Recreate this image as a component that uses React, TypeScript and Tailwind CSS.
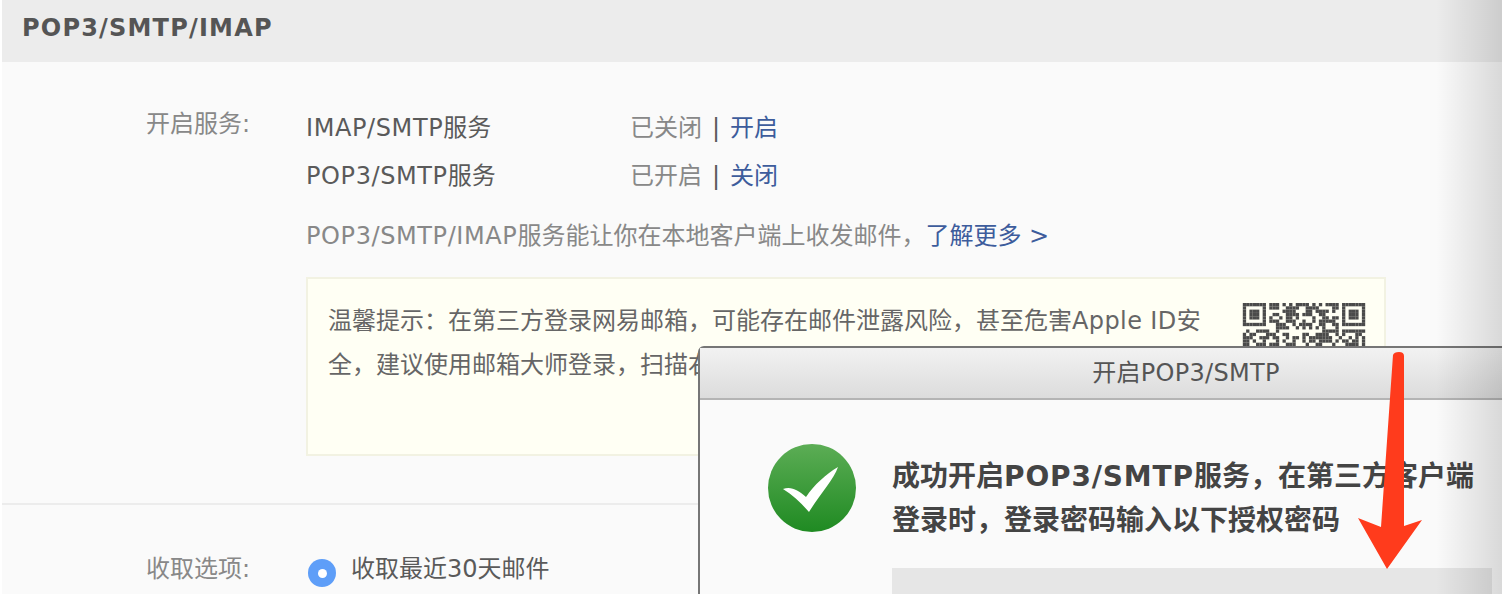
import React from "react";

const font = { fontFamily: '"DejaVu Sans","Noto Sans CJK SC",sans-serif' };
const C = "\uFF0C";
const K = "\uFF1A";

const W = 37;
const H = 13;
function finder(x: number, y: number) {
  const inX = x < 7 ? x : x >= W - 7 ? x - (W - 7) : -1;
  if (inX < 0 || y > 7) return null;
  if (y === 7) return false;
  const edge = inX === 0 || inX === 6 || y === 0 || y === 6;
  const core = inX >= 2 && inX <= 4 && y >= 2 && y <= 4;
  return edge || core;
}
function on(x: number, y: number) {
  const f = finder(x, y);
  if (f !== null) return f;
  if ((x === 7 || x === W - 8) && y < 8) return false;
  return ((x * 7 + y * 13 + ((x * y) % 5) * 11 + ((x ^ y) % 3) * 5) % 9) < 5;
}
const cells: [number, number][] = [];
for (let y = 0; y < H; y++) for (let x = 0; x < W; x++) if (on(x, y)) cells.push([x, y]);

function QR() {
  return (
    <svg width="124" height="43" viewBox="0 0 37 13" className="block" shapeRendering="geometricPrecision">
      {cells.map(([x, y]) => (
        <rect key={x + "-" + y} x={x} y={y} width="1" height="1" fill="#4a4a4a" />
      ))}
    </svg>
  );
}

function L({ children }: { children: React.ReactNode }) {
  return <span className="tracking-[0.6px]">{children}</span>;
}

function Row({ name, status, action }: { name: string; status: string; action: string }) {
  return (
    <div className="flex h-12 items-center">
      <span className="w-[324px] text-[#5a5a5a]">
        <L>{name}</L>服务
      </span>
      <span className="text-[#888]">{status}</span>
      <span className="ml-[10px] mr-[10px] text-[#5a5a5a]">|</span>
      <span className="text-[#3d5c9c]">{action}</span>
    </div>
  );
}

export default function App() {
  return (
    <div className="relative h-[594px] w-[1502px] overflow-hidden bg-white pl-[2px] text-[24px]" style={font}>
      <div className="h-full bg-[#fafafa]">
        <div className="flex h-[62px] items-center bg-[#ececec] pl-5 pb-[7px] text-[24px] font-bold tracking-[1.2px] text-[#555]">
          POP3/SMTP/IMAP
        </div>

        <div className="flex h-[443px] border-b-2 border-[#ececec] pt-[42px]">
          <div className="w-[304px] shrink-0 pl-[144px] leading-[40px] text-[#888]">开启服务:</div>
          <div className="w-[1080px]">
            <Row name="IMAP/SMTP" status="已关闭" action="开启" />
            <Row name="POP3/SMTP" status="已开启" action="关闭" />
            <div className="mt-[12px] flex h-12 items-center text-[#888]">
              <L>POP3/SMTP/IMAP</L>
              <span>{`服务能让你在本地客户端上收发邮件${C}`}</span>
              <span className="text-[#3d5c9c]">了解更多 &gt;</span>
            </div>
            <div className="mt-[17px] flex h-[179px] border-2 border-[#f2f2e2] bg-[#fffff4] pl-[20px] pr-[18px] pt-5">
              <div className="w-[875px] leading-[44px] text-[#666]">
                {`温馨提示${K}在第三方登录网易邮箱${C}可能存在邮件泄露风险${C}甚至危害`}
                <span className="tracking-[0.4px]">Apple ID</span>
                {`安全${C}建议使用邮箱大师登录${C}扫描右侧二维码下载。`}
              </div>
              <div className="ml-auto pt-[4px]">
                <QR />
              </div>
            </div>
          </div>
        </div>

        <div className="flex items-center pt-[46px]">
          <div className="w-[306px] shrink-0 pl-[144px] text-[#888]">收取选项:</div>
          <span className="mr-[15px] mt-[8px] flex h-7 w-7 items-center justify-center rounded-full bg-[#5e9ef8]">
            <span className="h-[9px] w-[9px] rounded-full bg-white" />
          </span>
          <span className="text-[#5a5a5a]">收取最近30天邮件</span>
        </div>
      </div>

      {/* dialog */}
      <div className="absolute left-[698px] top-[346px] h-[300px] w-[976px] rounded-tl-[6px] border-2 border-[#767676] bg-[#fafafa]">
        <div className="flex h-[52px] items-center justify-center border-b-2 border-[#b4b4b4] bg-gradient-to-b from-[#f2f2f2] to-[#dcdcdc] tracking-[0.3px] text-[#555]">
          开启POP3/SMTP
        </div>
        <div className="flex pl-[68px] pt-[44px]">
          <svg width="88" height="88" viewBox="0 0 88 88" className="shrink-0">
            <defs>
              <linearGradient id="g" x1="0" y1="0" x2="0" y2="1">
                <stop offset="0" stopColor="#5cad55" />
                <stop offset="1" stopColor="#1f8a22" />
              </linearGradient>
            </defs>
            <circle cx="44" cy="44" r="44" fill="url(#g)" />
            <path d="M15 45 C23 42 30 46 38 53 C46 41 58 30 70 23 C66 35 52 50 41 68 C33 59 25 51 15 45 Z" fill="#fff" />
          </svg>
          <div className="ml-9 w-[600px] pt-[11px]">
            <div className="w-[596px] text-[28px] font-bold leading-[44px] text-[#444]">
              成功开启<span className="tracking-[0.85px]">POP3/SMTP</span>
              {`服务${C}在第三方客户端登录时${C}登录密码输入以下授权密码`}
            </div>
            <div className="mt-[25px] h-20 w-[600px] bg-[#e6e6e6]" />
          </div>
        </div>
      </div>

      {/* right edge shading */}
      <div className="absolute right-0 top-0 h-full w-[66px] bg-gradient-to-r from-transparent to-[#00000022]" />

      {/* red arrow annotation */}
      <svg width="80" height="230" viewBox="0 0 80 230" className="absolute left-[1350px] top-[345px]">
        <path d="M43 10 Q44 7 49 7 Q54 7 54 11 L54 181 L72 175 L37 224 L8 173 L31 182 Z" fill="#ff3b1c" />
      </svg>
    </div>
  );
}
